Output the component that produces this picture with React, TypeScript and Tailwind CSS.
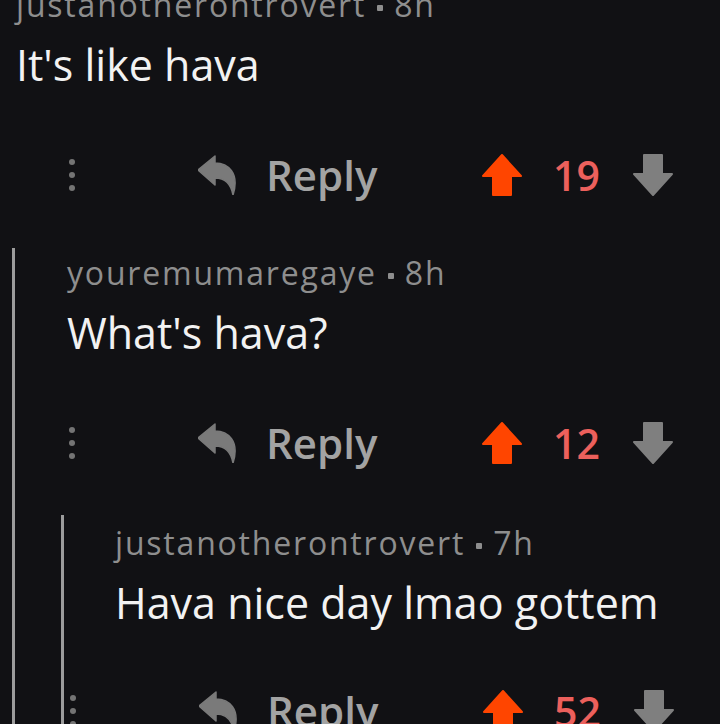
import type { ReactNode } from 'react'

// Reddit-style dark comment thread, three levels deep.

function ReplyIcon() {
  return (
    <svg viewBox="0 0 40 40" className="w-[40px] h-[40px]" aria-hidden="true">
      <path d="M0 15 L17 1 L17 8 C30 8 42 18 35 40 C33 29 28 23 17 23 L17 30 Z" fill="#7a7a7a" strokeLinejoin="round" stroke="#7a7a7a" strokeWidth="1.5" />
    </svg>
  )
}

function VoteArrow({ down = false, color }: { down?: boolean; color: string }) {
  return (
    <svg viewBox="0 0 40 42" className={`w-[40px] h-[42px] ${down ? 'rotate-180' : ''}`} aria-hidden="true">
      <path d="M20 1 L39 22 L29 22 L29 41 L11 41 L11 22 L1 22 Z" fill={color} strokeLinejoin="round" stroke={color} strokeWidth="2" />
    </svg>
  )
}

function ActionRow({ score, className }: { score: number; className: string }) {
  return (
    <div className={`flex items-center h-[44px] ${className}`}>
      <div className="flex flex-col gap-[7px] w-[6px]">
        <span className="block w-[6px] h-[6px] rounded-full bg-[#747474]" />
        <span className="block w-[6px] h-[6px] rounded-full bg-[#747474]" />
        <span className="block w-[6px] h-[6px] rounded-full bg-[#747474]" />
      </div>
      <div className="ml-[123px]">
        <ReplyIcon />
      </div>
      <span className="ml-[28px] w-[216px] text-[42px] leading-[44px] font-semibold text-[#a3a3a3]">Reply</span>
      <VoteArrow color="#ff4500" />
      <span className="ml-[31px] w-[80px] text-[41px] leading-[44px] font-semibold text-[#ec605c]">{score}</span>
      <VoteArrow down color="#7f7f7f" />
    </div>
  )
}

function Comment({ user, age, children }: { user: string; age: string; children: ReactNode }) {
  return (
    <>
      <p className="text-[32px] leading-[40px] tracking-[1.8px] text-[#8e8e8e] whitespace-nowrap">
        {user}
        <span className="inline-block w-[6px] h-[6px] mx-[11px] align-[6px] rounded-[1px] bg-[#8e8e8e]" />
        {age}
      </p>
      <p className="mt-[14px] text-[43px] leading-[52px] text-[#f2f2f2] whitespace-nowrap">{children}</p>
    </>
  )
}

export default function App() {
  return (
    <div className="w-[720px] h-[724px] overflow-hidden bg-[#111114] font-['Open_Sans','Noto_Sans',sans-serif]">
      <div className="-mt-[15px] pl-[16px]">
        <Comment user="justanotherontrovert" age="8h">It's like hava</Comment>
      </div>
      <ActionRow score={19} className="mt-[62px] ml-[69px]" />

      <div className="mt-[51px] ml-[12px] border-l-[3px] border-[#9c9c9c]">
        <div className="pt-[5px] pl-[52px]">
          <Comment user="youremumaregaye" age="8h">What's hava?</Comment>
        </div>
        <ActionRow score={12} className="mt-[62px] ml-[54px]" />

        <div className="mt-[50px] ml-[46px] border-l-[3px] border-[#9c9c9c]">
          <div className="pt-[8px] pl-[51px]">
            <Comment user="justanotherontrovert" age="7h">Hava nice day lmao gottem</Comment>
          </div>
          <ActionRow score={52} className="mt-[60px] ml-[6px]" />
        </div>
      </div>
    </div>
  )
}
